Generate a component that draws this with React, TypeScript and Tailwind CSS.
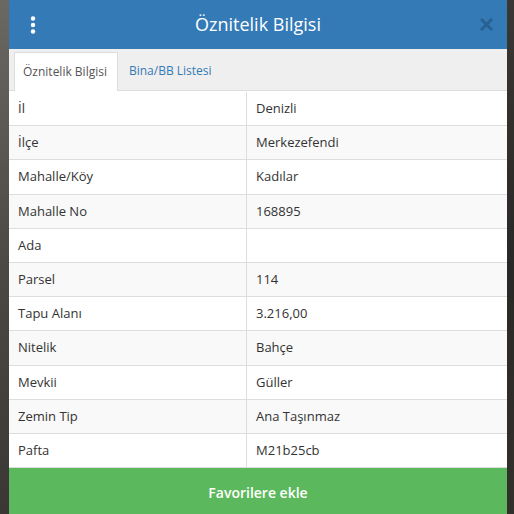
import React from "react";

const rows: [string, string][] = [
  ["İl", "Denizli"],
  ["İlçe", "Merkezefendi"],
  ["Mahalle/Köy", "Kadılar"],
  ["Mahalle No", "168895"],
  ["Ada", ""],
  ["Parsel", "114"],
  ["Tapu Alanı", "3.216,00"],
  ["Nitelik", "Bahçe"],
  ["Mevkii", "Güller"],
  ["Zemin Tip", "Ana Taşınmaz"],
  ["Pafta", "M21b25cb"],
];

function Kebab() {
  return (
    <svg width="6" height="18" viewBox="0 0 6 18" fill="#fff">
      <circle cx="3" cy="2.5" r="2.2" />
      <circle cx="3" cy="9" r="2.2" />
      <circle cx="3" cy="15.5" r="2.2" />
    </svg>
  );
}

function Close() {
  return (
    <svg width="13" height="13" viewBox="0 0 13 13" stroke="#000" strokeWidth="3" strokeLinecap="square" className="opacity-20">
      <path d="M2 2L11 11M11 2L2 11" />
    </svg>
  );
}

export default function App() {
  return (
    <div className="flex h-[514px] w-[514px] overflow-hidden bg-[#2e2c2a] font-['Open_Sans',sans-serif] text-[13px] text-[#333]">
      {/* map behind, left strip */}
      <div className="w-[9px] bg-gradient-to-b from-[#6b6863] via-[#4d4a46] to-[#3a3734]" />

      <div className="flex w-[498px] flex-col bg-white">
        {/* header */}
        <div className="flex h-[49px] items-center bg-[#337ab7]">
          <div className="flex w-[48px] pl-[21px]">
            <Kebab />
          </div>
          <h1 className="flex-1 text-center text-[18px] font-medium text-white">Öznitelik Bilgisi</h1>
          <div className="flex w-[48px] justify-end pr-[14px]">
            <Close />
          </div>
        </div>

        {/* tabs */}
        <div className="flex h-[42px] items-end border-b border-[#ddd] bg-[#efefef] px-[5px]">
          <div className="-mb-px flex h-[39px] items-center border border-b-0 border-[#ddd] bg-white pl-[8px] pr-[10px] text-[12px] text-[#555]">
            Öznitelik Bilgisi
          </div>
          <div className="flex h-[38px] items-center px-[11px] text-[12px] text-[#337ab7]">Bina/BB Listesi</div>
        </div>

        {/* attribute table */}
        <div className="flex flex-col pt-px">
          {rows.map(([k, v], i) => (
            <div
              key={k}
              className={`grid grid-cols-[238px_1fr] border-b border-[#ddd] ${i % 2 === 1 ? "bg-[#f9f9f9]" : "bg-white"}`}
            >
              <div className="border-r border-[#ddd] py-2 pl-[9px] leading-[17.2px]">{k}</div>
              <div className="py-2 pl-[9px] leading-[17.2px]">{v}</div>
            </div>
          ))}
        </div>

        {/* action */}
        <button className="flex flex-1 items-center justify-center bg-[#5cb85c] pt-[3px] text-[14px] font-semibold text-white">
          Favorilere ekle
        </button>
      </div>

      <div className="w-[7px] bg-gradient-to-b from-[#3a3734] via-[#2a2826] to-[#33302c]" />
    </div>
  );
}
